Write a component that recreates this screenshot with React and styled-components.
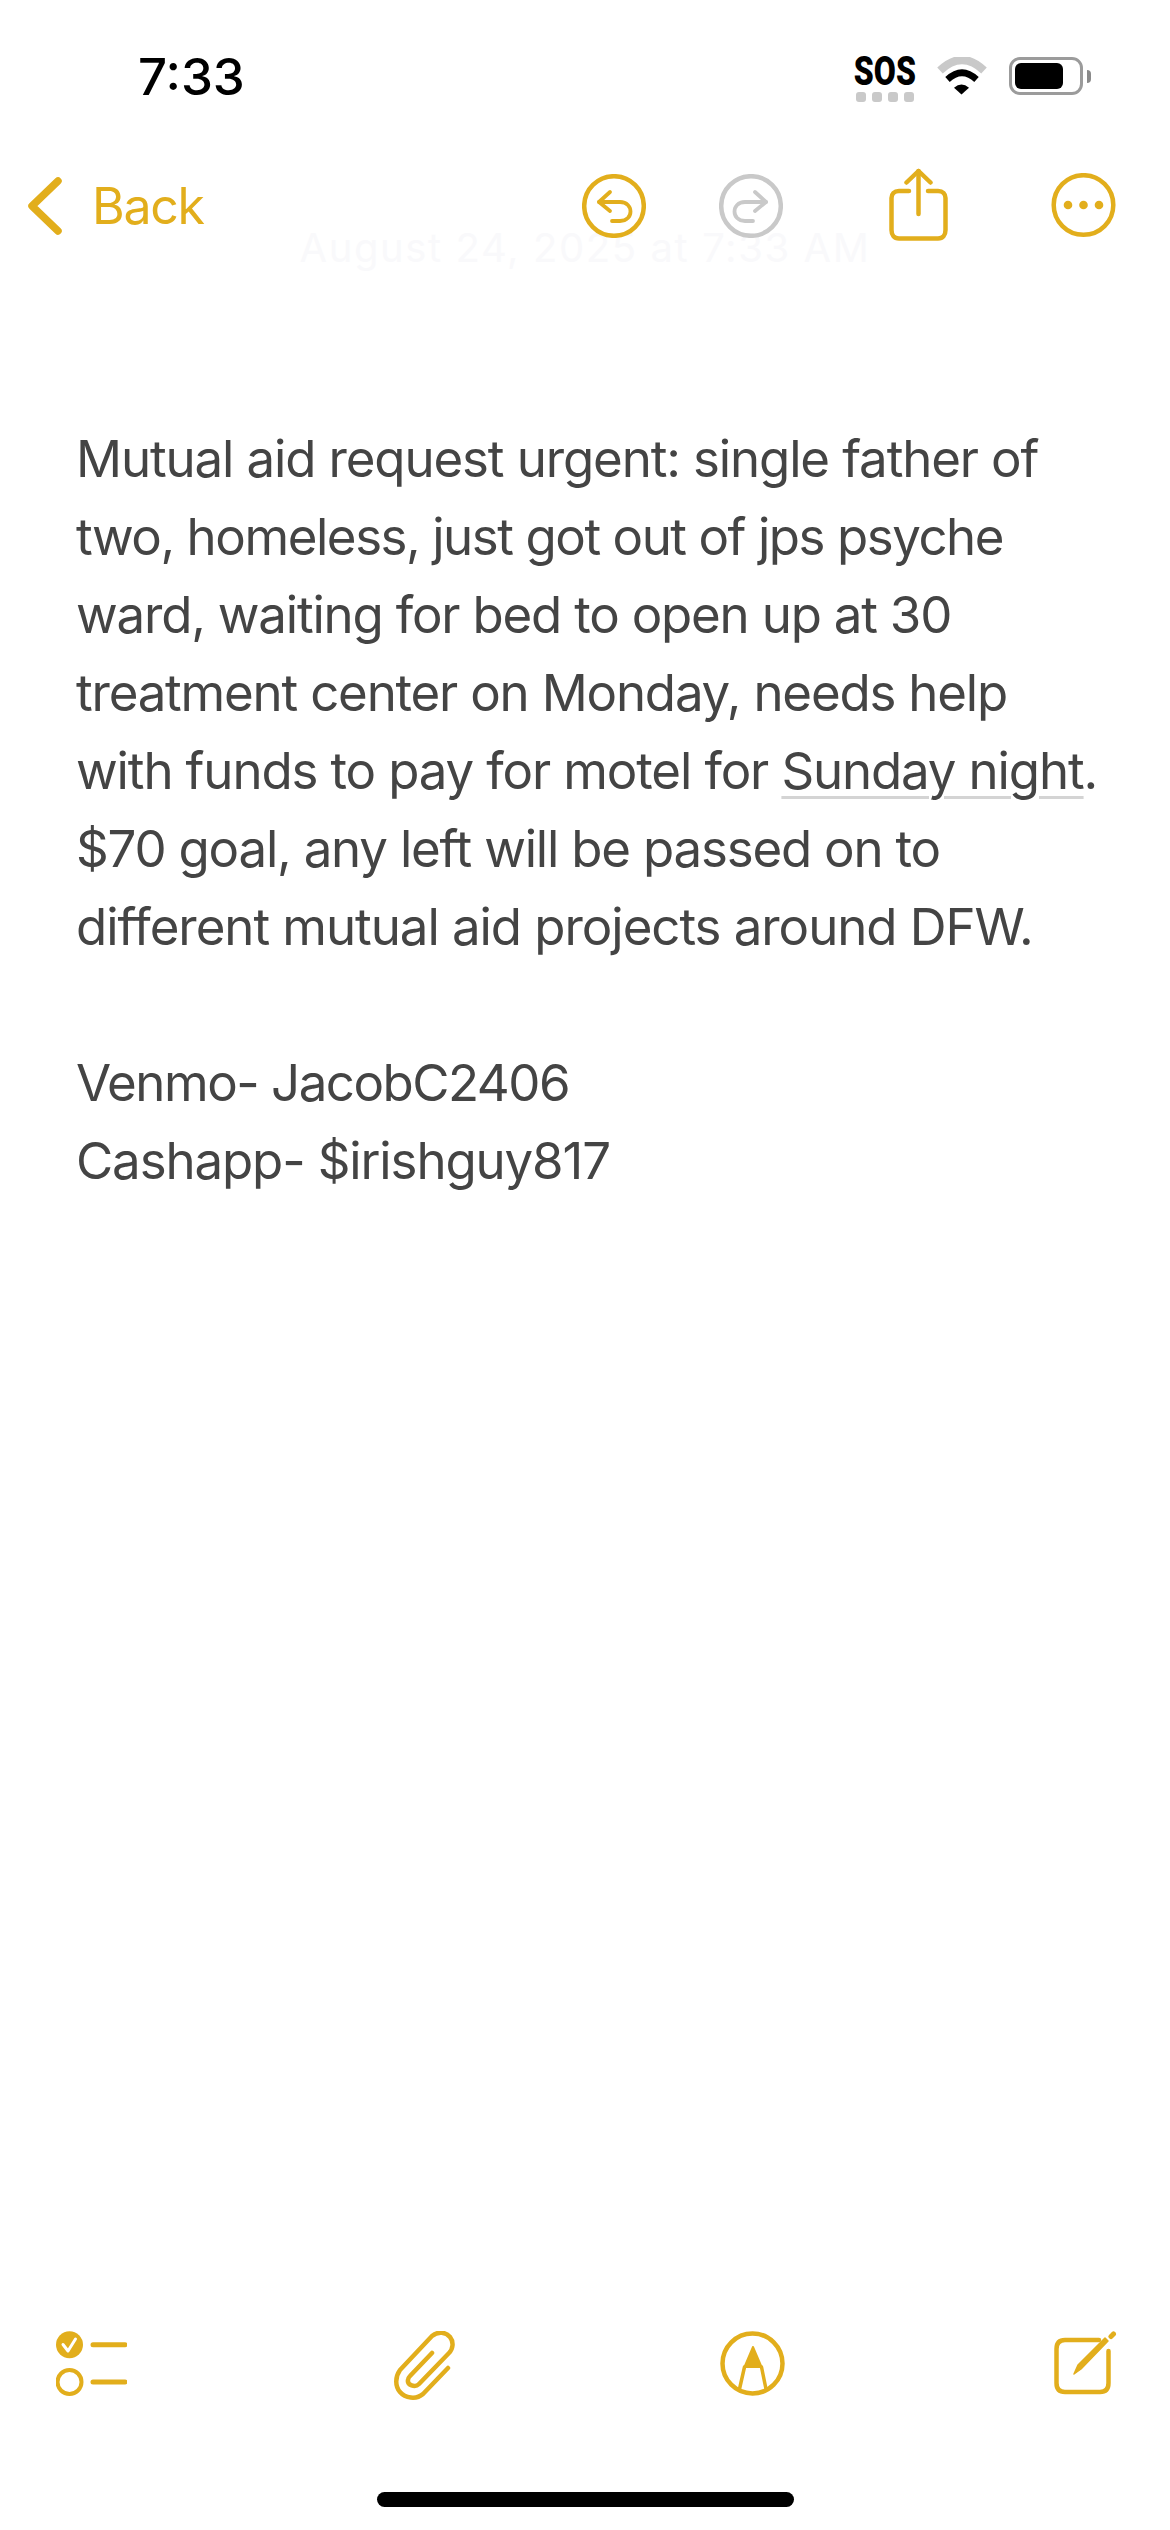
import React from 'react';
import styled, { createGlobalStyle } from 'styled-components';

const GOLD = '#e2ae1c';
const GREY = '#c9c9c9';

const GlobalStyle = createGlobalStyle`
html, body {
    margin: 0;
    padding: 0;
    background: #fff;
}
* {
    box-sizing: border-box;
}
`;

const Page = styled.div`
position: relative;
isolation: isolate;
display: flex;
flex-direction: column;
width: 1170px;
height: 2530px;
background: #fff;
font-family: Inter, "Liberation Sans", sans-serif;
overflow: hidden;
`;

const StatusBar = styled.div`
display: flex;
align-items: flex-start;
height: 168px;
padding: 57px 79px 0 138px;
`;

const Time = styled.div`
width: 716px;
font-size: 51px;
line-height: 40px;
font-weight: 500;
color: #000;
`;

const Sos = styled.div`
display: flex;
flex-direction: column;
align-items: center;
width: 62px;
margin-right: 21px;
`;

const SosLabel = styled.div`
font-family: Roboto, sans-serif;
font-weight: 900;
font-size: 40px;
line-height: 29px;
color: #000;
transform: scaleX(0.8);
`;

const SosDots = styled.div`
display: flex;
gap: 6px;
margin-top: 6px;
`;

const SosDot = styled.span`
width: 10px;
height: 10px;
border-radius: 3px;
background: ${GREY};
`;

const Battery = styled.div`
position: relative;
width: 74px;
height: 38px;
margin-left: 22px;
padding: 3px;
border: 3.5px solid #9b9b9b;
border-radius: 11px;
`;

const BatteryFill = styled.div`
width: 48px;
height: 26px;
border-radius: 6px;
background: #000;
`;

const BatteryNub = styled.div`
position: absolute;
top: 10px;
right: -11px;
width: 4px;
height: 13px;
border-radius: 0 6px 6px 0;
background: #8a8a8a;
`;

const NavBar = styled.div`
position: relative;
display: flex;
align-items: flex-start;
height: 73px;
padding-left: 28px;
`;

const BackLink = styled.div`
display: flex;
align-items: center;
width: 553.5px;
height: 76px;
gap: 30px;
font-size: 50px;
color: ${GOLD};
letter-spacing: -1.3px;
`;

const NavIcon = styled.svg`
flex: none;
display: block;
margin-top: ${(p) => p.$top}px;
margin-left: ${(p) => p.$left}px;
fill: none;
stroke: ${(p) => (p.$off ? GREY : GOLD)};
stroke-linecap: round;
stroke-linejoin: round;
`;

const FadedDate = styled.div`
position: absolute;
top: 58px;
left: 0;
right: 0;
z-index: -1;
text-align: center;
font-size: 40px;
line-height: 44px;
letter-spacing: 1.6px;
color: #f9f9fb;
`;

const Note = styled.div`
flex: 1;
padding: 179px 0 0 76px;
font-size: 51px;
line-height: 78px;
color: #444;
`;

const Line = styled.div`
white-space: pre;
min-height: 78px;
letter-spacing: ${(p) => p.$track ?? -1.13}px;
`;

const DateLink = styled.span`
text-decoration: underline;
text-decoration-color: #d4d4d4;
text-decoration-thickness: 3px;
text-underline-offset: 7px;
`;

const ToolBar = styled.div`
display: grid;
grid-template-columns: 338px 326px 334px auto;
justify-content: start;
align-items: start;
height: 161px;
padding-left: 56px;
`;

const ToolIcon = styled.svg`
display: block;
fill: none;
stroke: ${GOLD};
stroke-linecap: round;
stroke-linejoin: round;
`;

const HomeBar = styled.div`
align-self: center;
width: 417px;
height: 15px;
margin-bottom: 23px;
border-radius: 8px;
background: #000;
`;

const WifiIcon = () => (
    <svg width="50" height="38" viewBox="0 0 50 38" fill="none">
        <path d="M3 13.500Q25 -7.500 47 13.500" stroke={GREY} strokeWidth="8" />
        <path d="M10.500 22.500Q25 9 39.500 22.500" stroke="#000" strokeWidth="6.500" />
        <path d="M24.500 37.500L17 30.700Q24.500 24.500 32 30.700Z" fill="#000" />
    </svg>
);

const ChevronIcon = () => (
    <svg width="34" height="58" viewBox="0 0 34 58" fill="none" stroke={GOLD} strokeWidth="7.500" strokeLinecap="round" strokeLinejoin="round">
        <path d="M30 4L4 29L30 54" />
    </svg>
);

const UndoIcon = ({ off, left }) => (
    <NavIcon width="64" height="64" viewBox="0 0 64 64" $top={6} $left={left} $off={off}>
        <circle cx="32" cy="32" r="29.800" strokeWidth="4.500" />
        <g strokeWidth="3.800" transform={off ? 'translate(64 0) scale(-1 1)' : undefined}>
            <path d="M28 18L17 28L28 37" />
            <path d="M17 28H38C52 28 52 47 38 47H30" />
        </g>
    </NavIcon>
);

const ShareIcon = () => (
    <NavIcon width="59" height="73" viewBox="0 0 59 73" $top={0} $left={106.5}>
        <g strokeWidth="4.500">
            <path d="M20 23H10C5 23 2.500 26 2.500 30V62C2.500 67 5 70.500 10 70.500H49C54 70.500 56.500 67 56.500 62V30C56.500 26 54 23 49 23H39" />
            <path d="M29.500 46V3" />
            <path d="M17.500 14.500L29.500 3L41.500 14.500" />
        </g>
    </NavIcon>
);

const MoreIcon = () => (
    <NavIcon width="65" height="65" viewBox="0 0 65 65" $top={5} $left={103}>
        <circle cx="32.500" cy="32" r="29.800" strokeWidth="4.500" />
        <g fill={GOLD} stroke="none">
            <circle cx="17" cy="32" r="4.300" />
            <circle cx="32.500" cy="32" r="4.300" />
            <circle cx="48" cy="32" r="4.300" />
        </g>
    </NavIcon>
);

const ChecklistIcon = () => (
    <ToolIcon width="71" height="66" viewBox="0 0 71 66">
        <circle cx="13.500" cy="13.700" r="13.500" fill={GOLD} stroke="none" />
        <path d="M7 13.500L12 20L19.500 8" stroke="#fff" strokeWidth="3" />
        <circle cx="13.500" cy="51" r="12" strokeWidth="4" />
        <path d="M37 13.700H69M37 51H69" strokeWidth="5" />
    </ToolIcon>
);

const ClipIcon = () => (
    <ToolIcon width="61" height="69" viewBox="0 0 61 69">
        <path strokeWidth="4.500" d="M54 37L29 63C22 69 11 67 6 61C1 55 1 46 6 39L38 5C44 0 52 1 56 6C60 11 59 18 55 22L25 53C21 57 13 54 14 49C14 47 15 46 16 45L38 22" />
    </ToolIcon>
);

const MarkupIcon = () => (
    <ToolIcon width="65" height="65" viewBox="0 0 65 65">
        <circle cx="32.500" cy="32.500" r="30" strokeWidth="4.500" />
        <path d="M33 16L24.500 36H41.500Z" fill={GOLD} strokeWidth="2" />
        <path d="M24.500 36L19.500 58M41.500 36L46 58" strokeWidth="3.500" />
    </ToolIcon>
);

const ComposeIcon = () => (
    <ToolIcon width="64" height="64" viewBox="0 0 64 64">
        <path d="M45 9H11C5 9 2.500 12 2.500 18V52C2.500 58 5 61 11 61H46C52 61 54.500 58 54.500 52V20" strokeWidth="4.500" />
        <path d="M20 43L24 34L51 7L54 10L27 38Z" fill={GOLD} strokeWidth="1.500" />
        <path d="M57 5.500L59.500 3" strokeWidth="5" />
    </ToolIcon>
);

const App = () => {
    return (
        <Page>
            <GlobalStyle />
            <StatusBar>
                <Time>7:33</Time>
                <Sos>
                    <SosLabel>SOS</SosLabel>
                    <SosDots>
                        <SosDot />
                        <SosDot />
                        <SosDot />
                        <SosDot />
                    </SosDots>
                </Sos>
                <WifiIcon />
                <Battery>
                    <BatteryFill />
                    <BatteryNub />
                </Battery>
            </StatusBar>
            <NavBar>
                <FadedDate>August 24, 2025 at 7:33 AM</FadedDate>
                <BackLink>
                    <ChevronIcon />
                    <span>Back</span>
                </BackLink>
                <UndoIcon left={0} />
                <UndoIcon off left={73} />
                <ShareIcon />
                <MoreIcon />
            </NavBar>
            <Note>
                <Line>Mutual aid request urgent: single father of</Line>
                <Line $track={-1.45}>two, homeless, just got out of jps psyche</Line>
                <Line $track={-1.2}>ward, waiting for bed to open up at 30</Line>
                <Line $track={-1.2}>treatment center on Monday, needs help</Line>
                <Line>with funds to pay for motel for <DateLink>Sunday night</DateLink>.</Line>
                <Line $track={-1.2}>$70 goal, any left will be passed on to</Line>
                <Line $track={-1.05}>different mutual aid projects around DFW.</Line>
                <Line />
                <Line $track={-1.5}>Venmo- JacobC2406</Line>
                <Line>Cashapp- $irishguy817</Line>
            </Note>
            <ToolBar>
                <ChecklistIcon />
                <ClipIcon />
                <MarkupIcon />
                <ComposeIcon />
            </ToolBar>
            <HomeBar />
        </Page>
    );
};

export default App;
